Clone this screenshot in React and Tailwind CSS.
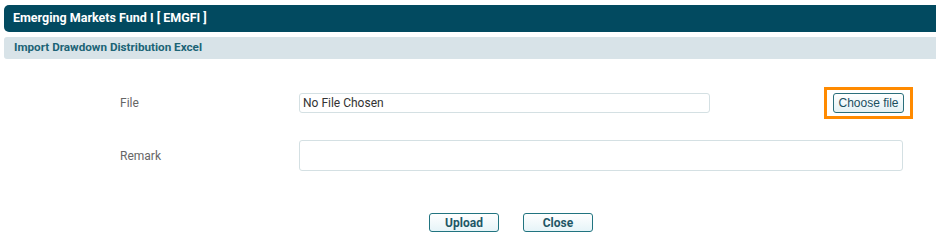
import React from 'react';

const App = () => {
  return (
    <div className="w-[936px] h-[246px] bg-white overflow-hidden font-['Roboto',sans-serif]">
      <div className="pl-1 pt-[5px]">
        <div className="h-[27px] bg-[#024a60] rounded-l-[5px] flex items-center pl-[9px] text-white text-[12.5px] font-bold">
          Emerging Markets Fund I [ EMGFI ]
        </div>
        <div className="mt-[5px] h-[22px] bg-[#d8e3e8] rounded-l-[3px] flex items-center pl-[10px] text-[#1c6476] text-[11.7px] font-bold">
          Import Drawdown Distribution Excel
        </div>
      </div>

      <div className="pl-[120px] mt-[28px]">
        <div className="flex items-center h-[32px]">
          <label className="w-[179px] text-[12px] text-[#666]">File</label>
          <div className="w-[411px] h-[20px] border border-[#d4e0e3] rounded-[3px] flex items-center pl-[3px] text-[12px] text-[#333]">
            No File Chosen
          </div>
          <div className="ml-[114px] w-[89px] h-[32px] border-[3px] border-[#ff8a00] flex items-center justify-center">
            <button className="w-[71px] h-[20px] border border-[#2a6f7c] rounded-[3px] bg-gradient-to-b from-white to-[#e3f1f5] text-[12px] text-[#1a4f5e] font-['Liberation_Sans',sans-serif] leading-none">
              Choose file
            </button>
          </div>
        </div>

        <div className="flex items-center mt-[21px]">
          <label className="w-[179px] text-[12px] text-[#666]">Remark</label>
          <div className="w-[604px] h-[31px] border border-[#d4e0e3] rounded-[3px]"></div>
        </div>
      </div>

      <div className="flex gap-6 ml-[429px] mt-[42px]">
        <button className="w-[70px] h-[19px] border border-[#217480] rounded-[3px] bg-gradient-to-b from-white to-[#e6f4f8] text-[12px] font-bold text-[#1f5766] leading-none">
          Upload
        </button>
        <button className="w-[70px] h-[19px] border border-[#217480] rounded-[3px] bg-gradient-to-b from-white to-[#e6f4f8] text-[12px] font-bold text-[#1f5766] leading-none">
          Close
        </button>
      </div>
    </div>
  );
};

export default App;
